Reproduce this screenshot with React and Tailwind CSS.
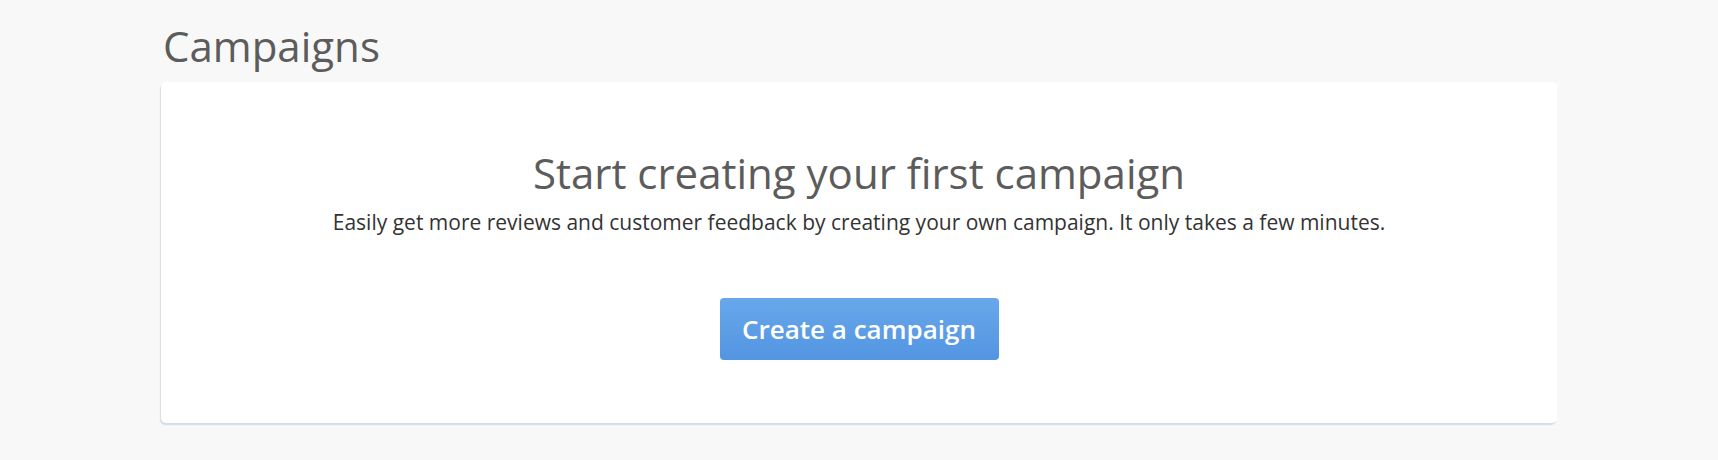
export default function App() {
  return (
    <div className="min-h-[460px] w-full bg-[#f8f8f8] font-['Open_Sans',sans-serif]">
      <div className="mx-auto w-[1396px] pt-[20px]">
        <h1 className="text-[42px] leading-[52px] text-[#5c5c5c] pl-[2px]">Campaigns</h1>
        <div className="mt-[10px] h-[341px] rounded-[5px] bg-white shadow-[-1px_2px_1px_rgba(200,210,222,0.7)] flex flex-col items-center">
          <h2 className="mt-[65px] text-[42px] leading-[52px] text-[#5c5c5c]">Start creating your first campaign</h2>
          <p className="mt-[9px] text-[21px] leading-[28px] text-[#333]">
            Easily get more reviews and customer feedback by creating your own campaign. It only takes a few minutes.
          </p>
          <button className="mt-[62px] h-[62px] w-[279px] rounded-[4px] bg-gradient-to-b from-[#68a7ea] to-[#5395e2] text-[26px] font-semibold text-white">
            Create a campaign
          </button>
        </div>
      </div>
    </div>
  )
}
